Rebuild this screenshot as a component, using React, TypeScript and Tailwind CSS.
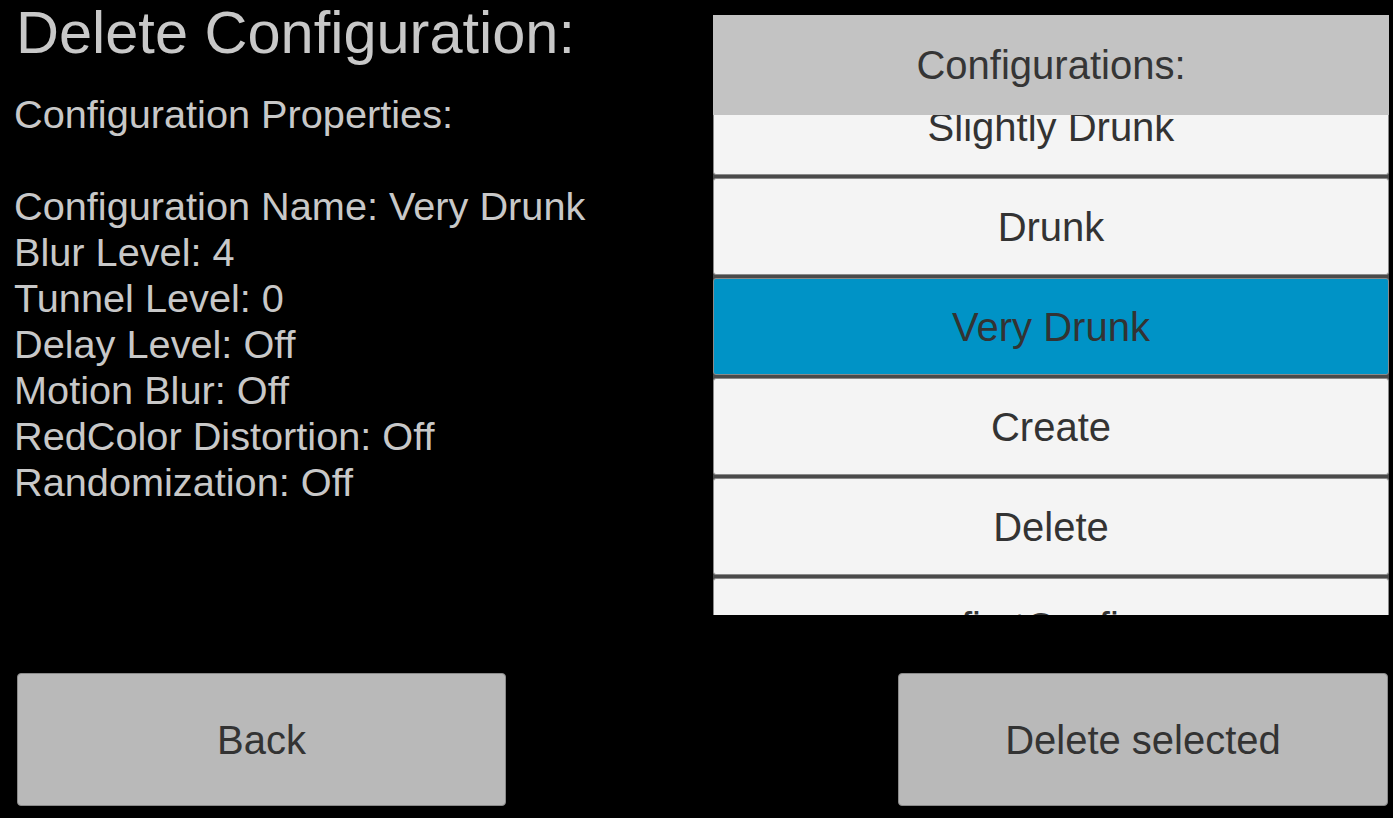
import React from "react";

const FONT = { fontFamily: '"Liberation Sans", Arial, sans-serif' };

interface ConfigRow {
  name: string;
  selected?: boolean;
}

const rows: ConfigRow[] = [
  { name: "Slightly Drunk" },
  { name: "Drunk" },
  { name: "Very Drunk", selected: true },
  { name: "Create" },
  { name: "Delete" },
  { name: "firstConfig" },
];

const properties = [
  "Configuration Name: Very Drunk",
  "Blur Level: 4",
  "Tunnel Level: 0",
  "Delay Level: Off",
  "Motion Blur: Off",
  "RedColor Distortion: Off",
  "Randomization: Off",
];

export default function App() {
  return (
    <div className="w-[1393px] h-[818px] bg-black overflow-hidden flex flex-col" style={FONT}>
      <div className="flex h-[615px]">
        {/* left: details of the selected configuration */}
        <div className="flex-1 pl-[14px] pt-[3px] text-[#c8c8c8]">
          <div className="text-[59.5px] leading-[59px] ml-[2px]">Delete Configuration:</div>
          <div className="mt-[29px] text-[39.7px] leading-[46px]">
            <div>Configuration Properties:</div>
            <div className="h-[46px]"></div>
            {properties.map((p) => (
              <div key={p}>{p}</div>
            ))}
          </div>
        </div>

        {/* right: configuration list */}
        <div className="w-[676px] mr-[4px] pt-[15px] flex flex-col">
          <div className="h-[100px] bg-[#c3c3c3] flex items-center justify-center text-[40px] text-[#353535] relative z-10">
            Configurations:
          </div>
          <div className="flex-1 overflow-hidden">
            <div className="-mt-[37px] flex flex-col gap-[3px] bg-[#4a4a4a]">
              {rows.map((r) => (
                <div
                  key={r.name}
                  className={`h-[97px] rounded-[3px] border border-[#8a8a8a] flex items-center justify-center text-[40px] text-[#333333] ${
                    r.selected ? "bg-[#0093c6]" : "bg-[#f4f4f4]"
                  }`}
                >
                  {r.name}
                </div>
              ))}
            </div>
          </div>
        </div>
      </div>

      {/* bottom buttons */}
      <div className="flex justify-between pl-[17px] pr-[5px] pt-[58px]">
        <button className="w-[489px] h-[133px] bg-[#b9b9b9] border border-[#8a8a8a] rounded-[4px] text-[40px] text-[#333333]">
          Back
        </button>
        <button className="w-[490px] h-[133px] bg-[#b9b9b9] border border-[#8a8a8a] rounded-[4px] text-[40px] text-[#333333]">
          Delete selected
        </button>
      </div>
    </div>
  );
}
